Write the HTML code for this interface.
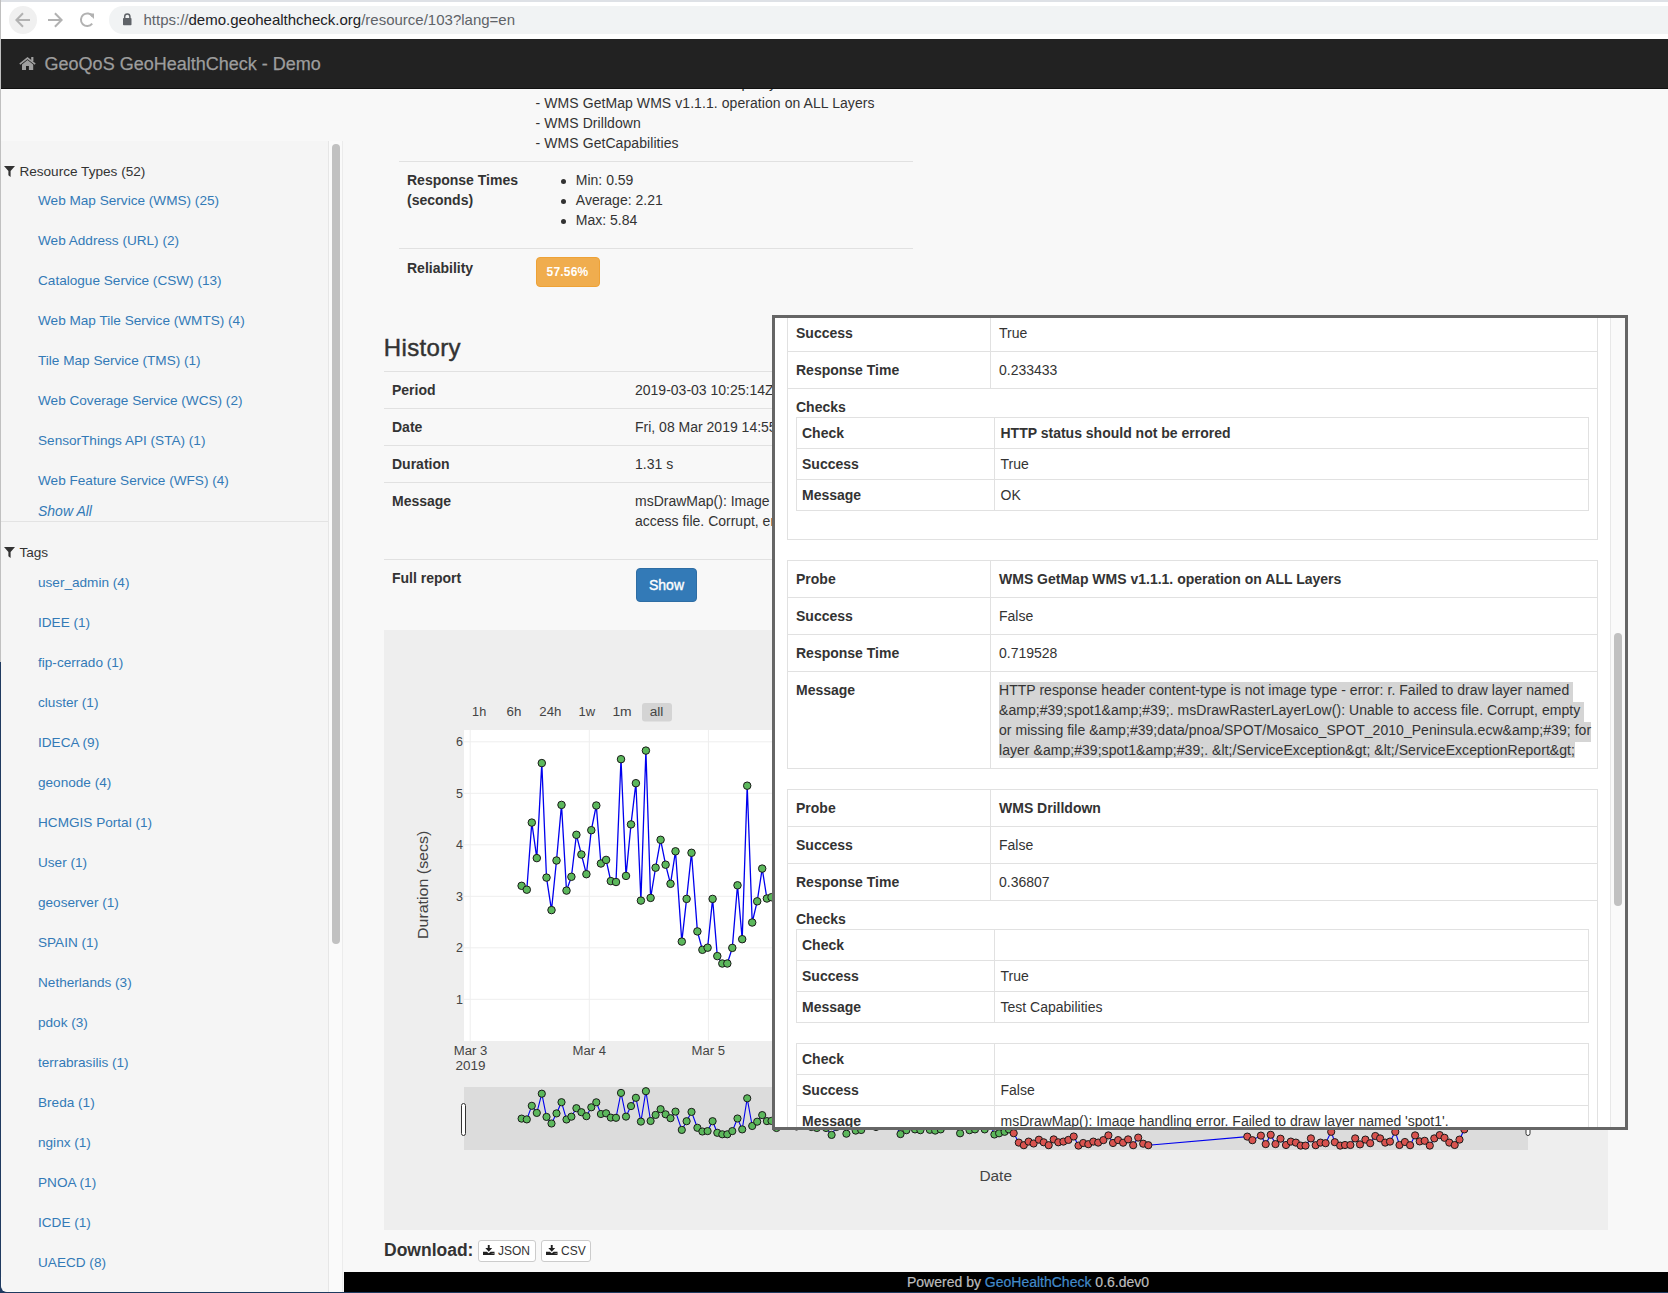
<!DOCTYPE html>
<html><head><meta charset="utf-8">
<style>
html,body{margin:0;padding:0;}
body{width:1668px;height:1293px;position:relative;overflow:hidden;background:#f8f8f8;font-family:"Liberation Sans",sans-serif;font-size:14px;line-height:20px;color:#333;}
.t{position:absolute;white-space:nowrap;line-height:20px;font-size:14px;}
.b{font-weight:bold;}
.lnk{color:#337ab7;}
.ab{position:absolute;}
.hl{position:absolute;background:#e1e1e1;height:1px;}
.vl{position:absolute;background:#e1e1e1;width:1px;}
</style></head><body>
<!-- left window edge -->
<div class="ab" style="left:0;top:0;width:1px;height:662px;background:#c0c0c0"></div><div class="ab" style="left:0;top:662px;width:1px;height:631px;background:#1f3a60"></div>
<!-- browser chrome -->
<div class="ab" style="left:1px;top:0;width:1667px;height:39px;background:#ffffff"></div>
<div class="ab" style="left:1px;top:0;width:1667px;height:2px;background:#dee1e6"></div>
<div class="ab" style="left:9px;top:6px;width:28px;height:28px;border-radius:14px;background:#f0f0f0"></div>
<svg class="ab" style="left:0;top:0" width="110" height="39">
 <g stroke="#b2b2b2" stroke-width="2" fill="none" stroke-linecap="butt">
  <path d="M16.5,20 H30 M23,13.2 L16.4,20 L23,26.8"/>
  <path d="M48,20 H61.5 M54.9,13.2 L61.6,20 L54.9,26.8"/>
  <path d="M92.2,23.6 A6.3,6.3 0 1 1 92.6,16.4"/>
 </g>
 <path d="M88.4,13.5 L94,13.5 L94,19 Z" fill="#b2b2b2"/>
</svg>
<div class="ab" style="left:109px;top:6px;width:1600px;height:28px;border-radius:14px;background:#f1f3f4"></div>
<svg class="ab" style="left:120px;top:10px" width="20" height="20">
 <path d="M4.7,8.5 V6.6 A2.6,2.6 0 0 1 9.9,6.6 V8.5" stroke="#5f6368" stroke-width="1.5" fill="none"/>
 <rect x="3" y="8" width="8.5" height="7.2" rx="0.8" fill="#5f6368"/>
</svg>
<div class="t" style="left:143.5px;top:10px;font-size:15px;color:#5f6368">https://<span style="color:#202124">demo.geohealthcheck.org</span>/resource/103?lang=en</div>

<!-- sidebar -->
<div class="ab" style="left:1px;top:141px;width:327px;height:1152px;background:#f5f5f5"></div>
<div class="ab" style="left:328px;top:141px;width:1px;height:1152px;background:#e6e6e6"></div>
<div class="ab" style="left:329px;top:141px;width:13px;height:1152px;background:#fafafa"></div>
<div class="ab" style="left:342px;top:141px;width:1px;height:1152px;background:#ececec"></div>
<div class="ab" style="left:332px;top:144px;width:8px;height:800px;border-radius:4px;background:#c1c1c1"></div>
<svg width="12" height="12" viewBox="0 0 12 12" style="position:absolute;left:3.9px;top:166px"><path d="M0,0 H11 L6.6,5 V11.1 L4.4,9.3 V5 Z" fill="#333"/></svg>
<div class="t " style="left:19.4px;top:162.1px;font-size:13.6px;color:#333">Resource Types (52)</div>
<div class="t lnk" style="left:38px;top:191.4px;font-size:13.6px;">Web Map Service (WMS) (25)</div>
<div class="t lnk" style="left:38px;top:231.4px;font-size:13.6px;">Web Address (URL) (2)</div>
<div class="t lnk" style="left:38px;top:271.4px;font-size:13.6px;">Catalogue Service (CSW) (13)</div>
<div class="t lnk" style="left:38px;top:311.4px;font-size:13.6px;">Web Map Tile Service (WMTS) (4)</div>
<div class="t lnk" style="left:38px;top:351.4px;font-size:13.6px;">Tile Map Service (TMS) (1)</div>
<div class="t lnk" style="left:38px;top:391.4px;font-size:13.6px;">Web Coverage Service (WCS) (2)</div>
<div class="t lnk" style="left:38px;top:431.4px;font-size:13.6px;">SensorThings API (STA) (1)</div>
<div class="t lnk" style="left:38px;top:471.4px;font-size:13.6px;">Web Feature Service (WFS) (4)</div>
<div class="t lnk" style="left:38px;top:501.3px;font-size:13.6px;font-style:italic;font-size:14px">Show All</div>
<div style="position:absolute;left:1px;top:521px;width:327px;height:1px;background:#e3e3e3"></div>
<svg width="12" height="12" viewBox="0 0 12 12" style="position:absolute;left:3.9px;top:546.5px"><path d="M0,0 H11 L6.6,5 V11.1 L4.4,9.3 V5 Z" fill="#333"/></svg>
<div class="t " style="left:19.4px;top:542.5px;font-size:13.6px;color:#333">Tags</div>
<div class="t lnk" style="left:38px;top:572.5px;font-size:13.6px;">user_admin (4)</div>
<div class="t lnk" style="left:38px;top:612.5px;font-size:13.6px;">IDEE (1)</div>
<div class="t lnk" style="left:38px;top:652.5px;font-size:13.6px;">fip-cerrado (1)</div>
<div class="t lnk" style="left:38px;top:692.5px;font-size:13.6px;">cluster (1)</div>
<div class="t lnk" style="left:38px;top:732.5px;font-size:13.6px;">IDECA (9)</div>
<div class="t lnk" style="left:38px;top:772.5px;font-size:13.6px;">geonode (4)</div>
<div class="t lnk" style="left:38px;top:812.5px;font-size:13.6px;">HCMGIS Portal (1)</div>
<div class="t lnk" style="left:38px;top:852.5px;font-size:13.6px;">User (1)</div>
<div class="t lnk" style="left:38px;top:892.5px;font-size:13.6px;">geoserver (1)</div>
<div class="t lnk" style="left:38px;top:932.5px;font-size:13.6px;">SPAIN (1)</div>
<div class="t lnk" style="left:38px;top:972.5px;font-size:13.6px;">Netherlands (3)</div>
<div class="t lnk" style="left:38px;top:1012.5px;font-size:13.6px;">pdok (3)</div>
<div class="t lnk" style="left:38px;top:1052.5px;font-size:13.6px;">terrabrasilis (1)</div>
<div class="t lnk" style="left:38px;top:1092.5px;font-size:13.6px;">Breda (1)</div>
<div class="t lnk" style="left:38px;top:1132.5px;font-size:13.6px;">nginx (1)</div>
<div class="t lnk" style="left:38px;top:1172.5px;font-size:13.6px;">PNOA (1)</div>
<div class="t lnk" style="left:38px;top:1212.5px;font-size:13.6px;">ICDE (1)</div>
<div class="t lnk" style="left:38px;top:1252.5px;font-size:13.6px;">UAECD (8)</div>

<!-- top info table -->
<div class="t" style="left:535.6px;top:72.7px;letter-spacing:0.07px">- WMS Service Check Ro<span style="display:inline-block;width:26px"></span>empathy</div>
<div class="t" style="left:535.6px;top:92.7px;letter-spacing:0.07px">- WMS GetMap WMS v1.1.1. operation on ALL Layers</div>
<div class="t" style="left:535.6px;top:112.7px;letter-spacing:0.07px">- WMS Drilldown</div>
<div class="t" style="left:535.6px;top:132.7px;letter-spacing:0.07px">- WMS GetCapabilities</div>
<div class="hl" style="left:399px;top:161px;width:514px"></div>
<div class="t b" style="left:407px;top:169.5px">Response Times</div>
<div class="t b" style="left:407px;top:189.5px">(seconds)</div>
<div class="ab" style="left:561px;top:178.5px;width:5px;height:5px;border-radius:3px;background:#333"></div>
<div class="ab" style="left:561px;top:198.5px;width:5px;height:5px;border-radius:3px;background:#333"></div>
<div class="ab" style="left:561px;top:218.5px;width:5px;height:5px;border-radius:3px;background:#333"></div>
<div class="t" style="left:575.8px;top:169.5px">Min: 0.59</div>
<div class="t" style="left:575.8px;top:189.5px">Average: 2.21</div>
<div class="t" style="left:575.8px;top:209.5px">Max: 5.84</div>
<div class="hl" style="left:399px;top:248px;width:514px"></div>
<div class="t b" style="left:407px;top:257.5px">Reliability</div>
<div class="ab" style="left:536px;top:257px;width:62px;height:28px;border:1px solid #eea236;border-radius:4px;background:#f0ad4e;color:#fff;font-weight:bold;font-size:12px;line-height:28px;text-align:center;letter-spacing:0.2px;text-indent:-1px">57.56%</div>

<!-- history -->
<div class="t" style="left:383.8px;top:333.3px;font-size:24px;line-height:30px;color:#333;-webkit-text-stroke:0.45px #333;letter-spacing:0.35px">History</div>
<div class="hl" style="left:384px;top:371px;width:1224px"></div>
<div class="hl" style="left:384px;top:408px;width:1224px"></div>
<div class="hl" style="left:384px;top:445px;width:1224px"></div>
<div class="hl" style="left:384px;top:482px;width:1224px"></div>
<div class="hl" style="left:384px;top:559px;width:1224px"></div>
<div class="t b" style="left:392px;top:380px">Period</div>
<div class="t" style="left:635px;top:380px">2019-03-03 10:25:14Z - 2019-03-08 14:55:14Z</div>
<div class="t b" style="left:392px;top:417px">Date</div>
<div class="t" style="left:635px;top:417px">Fri, 08 Mar 2019 14:55:14 GMT</div>
<div class="t b" style="left:392px;top:454px">Duration</div>
<div class="t" style="left:635px;top:454px">1.31 s</div>
<div class="t b" style="left:392px;top:491px">Message</div>
<div class="t" style="left:635px;top:491px">msDrawMap(): Image handling error. Failed to draw layer named 'spot1'.</div>
<div class="t" style="left:635px;top:511px">access file. Corrupt, empty or missing file</div>
<div class="t b" style="left:392px;top:568px">Full report</div>
<div class="ab" style="left:636px;top:568px;width:59px;height:32px;border:1px solid #2e6da4;border-radius:4px;background:#337ab7;color:#fff;line-height:32px;text-align:center;-webkit-text-stroke:0.35px #fff">Show</div>

<svg style="position:absolute;left:0;top:0" width="1668" height="1293">
<rect x="384" y="630" width="1224" height="600" fill="#eeeeee"/>
<rect x="464" y="730" width="1064" height="311" fill="#ffffff"/>
<line x1="464" x2="1528" y1="999.3" y2="999.3" stroke="#eeeeee" stroke-width="1"/>
<line x1="464" x2="1528" y1="947.8" y2="947.8" stroke="#eeeeee" stroke-width="1"/>
<line x1="464" x2="1528" y1="896.3" y2="896.3" stroke="#eeeeee" stroke-width="1"/>
<line x1="464" x2="1528" y1="844.8" y2="844.8" stroke="#eeeeee" stroke-width="1"/>
<line x1="464" x2="1528" y1="793.3" y2="793.3" stroke="#eeeeee" stroke-width="1"/>
<line x1="464" x2="1528" y1="741.8" y2="741.8" stroke="#eeeeee" stroke-width="1"/>
<line x1="470.2" x2="470.2" y1="730" y2="1041" stroke="#eeeeee" stroke-width="1"/>
<line x1="589.3" x2="589.3" y1="730" y2="1041" stroke="#eeeeee" stroke-width="1"/>
<line x1="708.4" x2="708.4" y1="730" y2="1041" stroke="#eeeeee" stroke-width="1"/>
<line x1="827.5" x2="827.5" y1="730" y2="1041" stroke="#eeeeee" stroke-width="1"/>
<line x1="946.6" x2="946.6" y1="730" y2="1041" stroke="#eeeeee" stroke-width="1"/>
<line x1="1065.7" x2="1065.7" y1="730" y2="1041" stroke="#eeeeee" stroke-width="1"/>
<line x1="1184.8" x2="1184.8" y1="730" y2="1041" stroke="#eeeeee" stroke-width="1"/>
<line x1="1303.9" x2="1303.9" y1="730" y2="1041" stroke="#eeeeee" stroke-width="1"/>
<line x1="1423.0" x2="1423.0" y1="730" y2="1041" stroke="#eeeeee" stroke-width="1"/>
<path d="M521.6,885.8 L526.8,889.7 L531.8,822.6 L536.8,858.1 L541.8,763.1 L546.5,877.6 L551.5,910.1 L556.5,860.5 L561.5,804.9 L566.5,890.6 L571.4,876.8 L576.4,834.8 L581.4,854.5 L586.4,874.2 L591.3,830.2 L596.3,805.5 L600.9,863.5 L606.1,859.9 L610.8,881.1 L616.0,882.0 L621.0,759.2 L626.0,875.9 L631.0,824.4 L635.9,783.2 L640.9,900.6 L645.9,750.6 L650.6,897.9 L655.6,867.7 L660.6,839.8 L665.6,864.7 L670.5,883.8 L675.5,851.3 L681.8,941.6 L686.6,898.9 L691.5,852.8 L697.4,931.4 L702.4,949.8 L707.6,947.7 L712.6,898.9 L717.3,956.1 L722.3,963.5 L727.3,963.5 L732.3,947.9 L737.5,885.3 L742.2,939.2 L747.2,785.7 L752.2,922.5 L757.2,901.3 L762.2,868.6 L766.9,898.5 L771.5,897.2" fill="none" stroke="#0000ee" stroke-width="1.3"/>
<g fill="#5cb85c" stroke="#1a1a1a" stroke-width="1"><circle cx="521.6" cy="885.8" r="3.75"/><circle cx="526.8" cy="889.7" r="3.75"/><circle cx="531.8" cy="822.6" r="3.75"/><circle cx="536.8" cy="858.1" r="3.75"/><circle cx="541.8" cy="763.1" r="3.75"/><circle cx="546.5" cy="877.6" r="3.75"/><circle cx="551.5" cy="910.1" r="3.75"/><circle cx="556.5" cy="860.5" r="3.75"/><circle cx="561.5" cy="804.9" r="3.75"/><circle cx="566.5" cy="890.6" r="3.75"/><circle cx="571.4" cy="876.8" r="3.75"/><circle cx="576.4" cy="834.8" r="3.75"/><circle cx="581.4" cy="854.5" r="3.75"/><circle cx="586.4" cy="874.2" r="3.75"/><circle cx="591.3" cy="830.2" r="3.75"/><circle cx="596.3" cy="805.5" r="3.75"/><circle cx="600.9" cy="863.5" r="3.75"/><circle cx="606.1" cy="859.9" r="3.75"/><circle cx="610.8" cy="881.1" r="3.75"/><circle cx="616.0" cy="882.0" r="3.75"/><circle cx="621.0" cy="759.2" r="3.75"/><circle cx="626.0" cy="875.9" r="3.75"/><circle cx="631.0" cy="824.4" r="3.75"/><circle cx="635.9" cy="783.2" r="3.75"/><circle cx="640.9" cy="900.6" r="3.75"/><circle cx="645.9" cy="750.6" r="3.75"/><circle cx="650.6" cy="897.9" r="3.75"/><circle cx="655.6" cy="867.7" r="3.75"/><circle cx="660.6" cy="839.8" r="3.75"/><circle cx="665.6" cy="864.7" r="3.75"/><circle cx="670.5" cy="883.8" r="3.75"/><circle cx="675.5" cy="851.3" r="3.75"/><circle cx="681.8" cy="941.6" r="3.75"/><circle cx="686.6" cy="898.9" r="3.75"/><circle cx="691.5" cy="852.8" r="3.75"/><circle cx="697.4" cy="931.4" r="3.75"/><circle cx="702.4" cy="949.8" r="3.75"/><circle cx="707.6" cy="947.7" r="3.75"/><circle cx="712.6" cy="898.9" r="3.75"/><circle cx="717.3" cy="956.1" r="3.75"/><circle cx="722.3" cy="963.5" r="3.75"/><circle cx="727.3" cy="963.5" r="3.75"/><circle cx="732.3" cy="947.9" r="3.75"/><circle cx="737.5" cy="885.3" r="3.75"/><circle cx="742.2" cy="939.2" r="3.75"/><circle cx="747.2" cy="785.7" r="3.75"/><circle cx="752.2" cy="922.5" r="3.75"/><circle cx="757.2" cy="901.3" r="3.75"/><circle cx="762.2" cy="868.6" r="3.75"/><circle cx="766.9" cy="898.5" r="3.75"/><circle cx="771.5" cy="897.2" r="3.75"/></g>
<rect x="464" y="1087" width="1064" height="63" fill="#dcdcdc"/>
<clipPath id="sc"><rect x="464" y="1087" width="1064" height="63"/></clipPath>
<g clip-path="url(#sc)">
<path d="M521.6,1118.6 L526.8,1119.4 L531.8,1105.8 L536.8,1112.9 L541.8,1093.7 L546.5,1116.9 L551.5,1123.5 L556.5,1113.4 L561.5,1102.2 L566.5,1119.5 L571.4,1116.7 L576.4,1108.2 L581.4,1112.2 L586.4,1116.2 L591.3,1107.3 L596.3,1102.3 L600.9,1114.0 L606.1,1113.3 L610.8,1117.6 L616.0,1117.8 L621.0,1092.9 L626.0,1116.6 L631.0,1106.1 L635.9,1097.8 L640.9,1121.6 L645.9,1091.2 L650.6,1121.0 L655.6,1114.9 L660.6,1109.2 L665.6,1114.3 L670.5,1118.2 L675.5,1111.6 L681.8,1129.9 L686.6,1121.2 L691.5,1111.9 L697.4,1127.8 L702.4,1131.5 L707.6,1131.1 L712.6,1121.2 L717.3,1132.8 L722.3,1134.3 L727.3,1134.3 L732.3,1131.1 L737.5,1118.5 L742.2,1129.4 L747.2,1098.3 L752.2,1126.0 L757.2,1121.7 L762.2,1115.1 L766.9,1121.1 L771.5,1120.9 L776.5,1128.0 L781.5,1120.0 L786.5,1112.0 L791.5,1118.0 L796.5,1126.5 L801.5,1115.0 L806.5,1110.0 L811.3,1127.0 L816.8,1128.0 L821.5,1118.0 L826.1,1128.0 L831.6,1134.9 L836.3,1127.0 L841.3,1120.0 L846.4,1133.7 L851.0,1120.0 L855.7,1130.6 L861.2,1130.0 L866.0,1116.0 L871.0,1122.0 L876.0,1127.0 L881.0,1118.0 L886.0,1112.0 L891.0,1120.0 L895.5,1125.0 L900.5,1134.1 L906.4,1130.2 L911.0,1122.0 L915.0,1129.4 L920.4,1130.2 L925.0,1120.0 L929.8,1129.8 L935.2,1130.6 L940.7,1129.4 L945.0,1118.0 L950.0,1112.0 L955.0,1124.0 L960.1,1133.3 L964.7,1124.0 L969.5,1130.2 L975.0,1129.4 L980.0,1120.0 L984.7,1129.4 L989.5,1122.0 L994.4,1134.5 L999.1,1133.3 L1004.6,1131.8 L1008.9,1129.4 L1013.7,1133.2 L1018.8,1142.6 L1023.8,1145.2 L1028.6,1141.6 L1033.6,1143.5 L1038.9,1139.7 L1043.7,1142.3 L1048.7,1145.2 L1053.7,1139.4 L1058.3,1142.3 L1063.4,1141.6 L1068.4,1139.9 L1073.7,1136.5 L1078.5,1145.6 L1083.2,1143.0 L1088.3,1144.2 L1093.3,1141.6 L1098.2,1142.6 L1103.4,1140.1 L1108.4,1135.4 L1113.0,1143.0 L1118.1,1140.1 L1123.1,1142.7 L1128.1,1139.4 L1133.2,1145.2 L1138.2,1137.6 L1143.2,1143.7 L1148.3,1145.2 L1247.3,1136.6 L1252.4,1140.2 L1260.9,1135.6 L1265.7,1144.1 L1270.7,1134.8 L1275.5,1144.1 L1280.5,1138.7 L1286.0,1145.0 L1290.8,1141.6 L1295.9,1142.6 L1300.7,1145.6 L1305.5,1145.6 L1310.9,1138.4 L1315.7,1145.2 L1320.5,1142.6 L1325.6,1143.2 L1331.2,1131.8 L1334.8,1142.2 L1340.2,1145.6 L1345.0,1145.0 L1350.4,1145.0 L1355.2,1138.4 L1360.0,1144.4 L1365.4,1139.6 L1370.2,1143.2 L1375.3,1136.0 L1380.1,1138.4 L1385.2,1142.6 L1390.0,1141.6 L1395.3,1131.8 L1399.5,1145.0 L1404.9,1142.0 L1410.1,1145.2 L1415.1,1135.4 L1419.7,1141.4 L1424.7,1140.8 L1429.8,1145.6 L1434.3,1138.4 L1439.7,1135.1 L1444.5,1137.8 L1449.3,1142.6 L1454.7,1145.0 L1459.5,1139.6 L1464.3,1129.4" fill="none" stroke="#0000ee" stroke-width="1.1"/>
<g fill="#5cb85c" stroke="#1a1a1a" stroke-width="1"><circle cx="521.6" cy="1118.6" r="3.6"/><circle cx="526.8" cy="1119.4" r="3.6"/><circle cx="531.8" cy="1105.8" r="3.6"/><circle cx="536.8" cy="1112.9" r="3.6"/><circle cx="541.8" cy="1093.7" r="3.6"/><circle cx="546.5" cy="1116.9" r="3.6"/><circle cx="551.5" cy="1123.5" r="3.6"/><circle cx="556.5" cy="1113.4" r="3.6"/><circle cx="561.5" cy="1102.2" r="3.6"/><circle cx="566.5" cy="1119.5" r="3.6"/><circle cx="571.4" cy="1116.7" r="3.6"/><circle cx="576.4" cy="1108.2" r="3.6"/><circle cx="581.4" cy="1112.2" r="3.6"/><circle cx="586.4" cy="1116.2" r="3.6"/><circle cx="591.3" cy="1107.3" r="3.6"/><circle cx="596.3" cy="1102.3" r="3.6"/><circle cx="600.9" cy="1114.0" r="3.6"/><circle cx="606.1" cy="1113.3" r="3.6"/><circle cx="610.8" cy="1117.6" r="3.6"/><circle cx="616.0" cy="1117.8" r="3.6"/><circle cx="621.0" cy="1092.9" r="3.6"/><circle cx="626.0" cy="1116.6" r="3.6"/><circle cx="631.0" cy="1106.1" r="3.6"/><circle cx="635.9" cy="1097.8" r="3.6"/><circle cx="640.9" cy="1121.6" r="3.6"/><circle cx="645.9" cy="1091.2" r="3.6"/><circle cx="650.6" cy="1121.0" r="3.6"/><circle cx="655.6" cy="1114.9" r="3.6"/><circle cx="660.6" cy="1109.2" r="3.6"/><circle cx="665.6" cy="1114.3" r="3.6"/><circle cx="670.5" cy="1118.2" r="3.6"/><circle cx="675.5" cy="1111.6" r="3.6"/><circle cx="681.8" cy="1129.9" r="3.6"/><circle cx="686.6" cy="1121.2" r="3.6"/><circle cx="691.5" cy="1111.9" r="3.6"/><circle cx="697.4" cy="1127.8" r="3.6"/><circle cx="702.4" cy="1131.5" r="3.6"/><circle cx="707.6" cy="1131.1" r="3.6"/><circle cx="712.6" cy="1121.2" r="3.6"/><circle cx="717.3" cy="1132.8" r="3.6"/><circle cx="722.3" cy="1134.3" r="3.6"/><circle cx="727.3" cy="1134.3" r="3.6"/><circle cx="732.3" cy="1131.1" r="3.6"/><circle cx="737.5" cy="1118.5" r="3.6"/><circle cx="742.2" cy="1129.4" r="3.6"/><circle cx="747.2" cy="1098.3" r="3.6"/><circle cx="752.2" cy="1126.0" r="3.6"/><circle cx="757.2" cy="1121.7" r="3.6"/><circle cx="762.2" cy="1115.1" r="3.6"/><circle cx="766.9" cy="1121.1" r="3.6"/><circle cx="771.5" cy="1120.9" r="3.6"/><circle cx="776.5" cy="1128.0" r="3.6"/><circle cx="781.5" cy="1120.0" r="3.6"/><circle cx="786.5" cy="1112.0" r="3.6"/><circle cx="791.5" cy="1118.0" r="3.6"/><circle cx="796.5" cy="1126.5" r="3.6"/><circle cx="801.5" cy="1115.0" r="3.6"/><circle cx="806.5" cy="1110.0" r="3.6"/><circle cx="811.3" cy="1127.0" r="3.6"/><circle cx="816.8" cy="1128.0" r="3.6"/><circle cx="821.5" cy="1118.0" r="3.6"/><circle cx="826.1" cy="1128.0" r="3.6"/><circle cx="831.6" cy="1134.9" r="3.6"/><circle cx="836.3" cy="1127.0" r="3.6"/><circle cx="841.3" cy="1120.0" r="3.6"/><circle cx="846.4" cy="1133.7" r="3.6"/><circle cx="851.0" cy="1120.0" r="3.6"/><circle cx="855.7" cy="1130.6" r="3.6"/><circle cx="861.2" cy="1130.0" r="3.6"/><circle cx="866.0" cy="1116.0" r="3.6"/><circle cx="871.0" cy="1122.0" r="3.6"/><circle cx="876.0" cy="1127.0" r="3.6"/><circle cx="881.0" cy="1118.0" r="3.6"/><circle cx="886.0" cy="1112.0" r="3.6"/><circle cx="891.0" cy="1120.0" r="3.6"/><circle cx="895.5" cy="1125.0" r="3.6"/><circle cx="900.5" cy="1134.1" r="3.6"/><circle cx="906.4" cy="1130.2" r="3.6"/><circle cx="911.0" cy="1122.0" r="3.6"/><circle cx="915.0" cy="1129.4" r="3.6"/><circle cx="920.4" cy="1130.2" r="3.6"/><circle cx="925.0" cy="1120.0" r="3.6"/><circle cx="929.8" cy="1129.8" r="3.6"/><circle cx="935.2" cy="1130.6" r="3.6"/><circle cx="940.7" cy="1129.4" r="3.6"/><circle cx="945.0" cy="1118.0" r="3.6"/><circle cx="950.0" cy="1112.0" r="3.6"/><circle cx="955.0" cy="1124.0" r="3.6"/><circle cx="960.1" cy="1133.3" r="3.6"/><circle cx="964.7" cy="1124.0" r="3.6"/><circle cx="969.5" cy="1130.2" r="3.6"/><circle cx="975.0" cy="1129.4" r="3.6"/><circle cx="980.0" cy="1120.0" r="3.6"/><circle cx="984.7" cy="1129.4" r="3.6"/><circle cx="989.5" cy="1122.0" r="3.6"/><circle cx="994.4" cy="1134.5" r="3.6"/><circle cx="999.1" cy="1133.3" r="3.6"/><circle cx="1004.6" cy="1131.8" r="3.6"/><circle cx="1008.9" cy="1129.4" r="3.6"/></g>
<g fill="#d9534f" stroke="#1a1a1a" stroke-width="1"><circle cx="1013.7" cy="1133.2" r="3.6"/><circle cx="1018.8" cy="1142.6" r="3.6"/><circle cx="1023.8" cy="1145.2" r="3.6"/><circle cx="1028.6" cy="1141.6" r="3.6"/><circle cx="1033.6" cy="1143.5" r="3.6"/><circle cx="1038.9" cy="1139.7" r="3.6"/><circle cx="1043.7" cy="1142.3" r="3.6"/><circle cx="1048.7" cy="1145.2" r="3.6"/><circle cx="1053.7" cy="1139.4" r="3.6"/><circle cx="1058.3" cy="1142.3" r="3.6"/><circle cx="1063.4" cy="1141.6" r="3.6"/><circle cx="1068.4" cy="1139.9" r="3.6"/><circle cx="1073.7" cy="1136.5" r="3.6"/><circle cx="1078.5" cy="1145.6" r="3.6"/><circle cx="1083.2" cy="1143.0" r="3.6"/><circle cx="1088.3" cy="1144.2" r="3.6"/><circle cx="1093.3" cy="1141.6" r="3.6"/><circle cx="1098.2" cy="1142.6" r="3.6"/><circle cx="1103.4" cy="1140.1" r="3.6"/><circle cx="1108.4" cy="1135.4" r="3.6"/><circle cx="1113.0" cy="1143.0" r="3.6"/><circle cx="1118.1" cy="1140.1" r="3.6"/><circle cx="1123.1" cy="1142.7" r="3.6"/><circle cx="1128.1" cy="1139.4" r="3.6"/><circle cx="1133.2" cy="1145.2" r="3.6"/><circle cx="1138.2" cy="1137.6" r="3.6"/><circle cx="1143.2" cy="1143.7" r="3.6"/><circle cx="1148.3" cy="1145.2" r="3.6"/><circle cx="1247.3" cy="1136.6" r="3.6"/><circle cx="1252.4" cy="1140.2" r="3.6"/><circle cx="1260.9" cy="1135.6" r="3.6"/><circle cx="1265.7" cy="1144.1" r="3.6"/><circle cx="1270.7" cy="1134.8" r="3.6"/><circle cx="1275.5" cy="1144.1" r="3.6"/><circle cx="1280.5" cy="1138.7" r="3.6"/><circle cx="1286.0" cy="1145.0" r="3.6"/><circle cx="1290.8" cy="1141.6" r="3.6"/><circle cx="1295.9" cy="1142.6" r="3.6"/><circle cx="1300.7" cy="1145.6" r="3.6"/><circle cx="1305.5" cy="1145.6" r="3.6"/><circle cx="1310.9" cy="1138.4" r="3.6"/><circle cx="1315.7" cy="1145.2" r="3.6"/><circle cx="1320.5" cy="1142.6" r="3.6"/><circle cx="1325.6" cy="1143.2" r="3.6"/><circle cx="1331.2" cy="1131.8" r="3.6"/><circle cx="1334.8" cy="1142.2" r="3.6"/><circle cx="1340.2" cy="1145.6" r="3.6"/><circle cx="1345.0" cy="1145.0" r="3.6"/><circle cx="1350.4" cy="1145.0" r="3.6"/><circle cx="1355.2" cy="1138.4" r="3.6"/><circle cx="1360.0" cy="1144.4" r="3.6"/><circle cx="1365.4" cy="1139.6" r="3.6"/><circle cx="1370.2" cy="1143.2" r="3.6"/><circle cx="1375.3" cy="1136.0" r="3.6"/><circle cx="1380.1" cy="1138.4" r="3.6"/><circle cx="1385.2" cy="1142.6" r="3.6"/><circle cx="1390.0" cy="1141.6" r="3.6"/><circle cx="1395.3" cy="1131.8" r="3.6"/><circle cx="1399.5" cy="1145.0" r="3.6"/><circle cx="1404.9" cy="1142.0" r="3.6"/><circle cx="1410.1" cy="1145.2" r="3.6"/><circle cx="1415.1" cy="1135.4" r="3.6"/><circle cx="1419.7" cy="1141.4" r="3.6"/><circle cx="1424.7" cy="1140.8" r="3.6"/><circle cx="1429.8" cy="1145.6" r="3.6"/><circle cx="1434.3" cy="1138.4" r="3.6"/><circle cx="1439.7" cy="1135.1" r="3.6"/><circle cx="1444.5" cy="1137.8" r="3.6"/><circle cx="1449.3" cy="1142.6" r="3.6"/><circle cx="1454.7" cy="1145.0" r="3.6"/><circle cx="1459.5" cy="1139.6" r="3.6"/><circle cx="1464.3" cy="1129.4" r="3.6"/></g>
</g>
<rect x="461.5" y="1103.5" width="4" height="32" rx="2" fill="#fff" stroke="#333" stroke-width="1"/>
<rect x="1526" y="1103.5" width="4" height="32" rx="2" fill="#fff" stroke="#333" stroke-width="1"/>
<rect x="642" y="703" width="30" height="18.5" rx="3" fill="#d4d4d4"/>
<text x="472.1" y="716" font-family="Liberation Sans" fill="#444" font-size="12.5" textLength="14.1" lengthAdjust="spacingAndGlyphs">1h</text>
<text x="506.6" y="716" font-family="Liberation Sans" fill="#444" font-size="12.5" textLength="14.8" lengthAdjust="spacingAndGlyphs">6h</text>
<text x="539.3" y="716" font-family="Liberation Sans" fill="#444" font-size="12.5" textLength="22.1" lengthAdjust="spacingAndGlyphs">24h</text>
<text x="578.6" y="716" font-family="Liberation Sans" fill="#444" font-size="12.5" textLength="16.6" lengthAdjust="spacingAndGlyphs">1w</text>
<text x="612.4" y="716" font-family="Liberation Sans" fill="#444" font-size="12.5" textLength="19.3" lengthAdjust="spacingAndGlyphs">1m</text>
<text x="649.7" y="716" font-family="Liberation Sans" fill="#444" font-size="12.5" textLength="13.7" lengthAdjust="spacingAndGlyphs">all</text>
<text x="463" y="1003.8" font-family="Liberation Sans" fill="#444" font-size="12.5" text-anchor="end">1</text>
<text x="463" y="952.3" font-family="Liberation Sans" fill="#444" font-size="12.5" text-anchor="end">2</text>
<text x="463" y="900.8" font-family="Liberation Sans" fill="#444" font-size="12.5" text-anchor="end">3</text>
<text x="463" y="849.3" font-family="Liberation Sans" fill="#444" font-size="12.5" text-anchor="end">4</text>
<text x="463" y="797.8" font-family="Liberation Sans" fill="#444" font-size="12.5" text-anchor="end">5</text>
<text x="463" y="746.3" font-family="Liberation Sans" fill="#444" font-size="12.5" text-anchor="end">6</text>
<text x="453.8" y="1054.5" font-family="Liberation Sans" fill="#444" font-size="12.5" textLength="33.6" lengthAdjust="spacingAndGlyphs">Mar 3</text>
<text x="455.6" y="1070" font-family="Liberation Sans" fill="#444" font-size="12.5" textLength="30" lengthAdjust="spacingAndGlyphs">2019</text>
<text x="572.5" y="1054.5" font-family="Liberation Sans" fill="#444" font-size="12.5" textLength="33.5" lengthAdjust="spacingAndGlyphs">Mar 4</text>
<text x="691.6" y="1054.5" font-family="Liberation Sans" fill="#444" font-size="12.5" textLength="33.5" lengthAdjust="spacingAndGlyphs">Mar 5</text>
<text x="979.4" y="1181" font-family="Liberation Sans" fill="#444" font-size="14" textLength="32.6" lengthAdjust="spacingAndGlyphs">Date</text>
<text transform="translate(428,939) rotate(-90)" font-family="Liberation Sans" fill="#444" font-size="14.5" textLength="108.3" lengthAdjust="spacingAndGlyphs">Duration (secs)</text>
</svg>

<!-- download -->
<div class="t b" style="left:384px;top:1238px;font-size:17.5px;line-height:24px">Download:</div>
<div class="ab" style="left:478px;top:1240px;width:56px;height:20px;border:1px solid #ccc;border-radius:3px;background:#fff;font-size:12px;line-height:20px;color:#333">
 <svg class="ab" style="left:4.3px;top:3.8px" width="12" height="11" viewBox="0 0 12 11"><path d="M4.8,0 H6.7 V3.1 H9.2 L5.75,6.7 L2.3,3.1 H4.8 Z M0,6.7 H3.9 L5.75,8.3 L7.6,6.7 H11.5 V10 H0 Z" fill="#222"/><circle cx="9.1" cy="8.4" r="0.45" fill="#fff"/><circle cx="10.3" cy="8.4" r="0.45" fill="#fff"/></svg>
 <span class="ab" style="left:19px;top:0">JSON</span></div>
<div class="ab" style="left:541px;top:1240px;width:48px;height:20px;border:1px solid #ccc;border-radius:3px;background:#fff;font-size:12px;line-height:20px;color:#333">
 <svg class="ab" style="left:4.3px;top:3.8px" width="12" height="11" viewBox="0 0 12 11"><path d="M4.8,0 H6.7 V3.1 H9.2 L5.75,6.7 L2.3,3.1 H4.8 Z M0,6.7 H3.9 L5.75,8.3 L7.6,6.7 H11.5 V10 H0 Z" fill="#222"/><circle cx="9.1" cy="8.4" r="0.45" fill="#fff"/><circle cx="10.3" cy="8.4" r="0.45" fill="#fff"/></svg>
 <span class="ab" style="left:19px;top:0">CSV</span></div>

<!-- footer -->
<div class="ab" style="left:344px;top:1272px;width:1324px;height:21px;background:#000"></div>
<div class="t" style="left:907px;top:1272px;color:#bdbdbd;-webkit-text-stroke:0.2px #bdbdbd">Powered by <span style="color:#428bca;-webkit-text-stroke:0.2px #428bca">GeoHealthCheck</span> 0.6.dev0</div>
<div class="ab" style="left:0;top:1292px;width:1668px;height:1px;background:#1e3a5f"></div>
<div class="ab" style="left:0;top:1283px;width:10px;height:10px;background:#1f3a60"></div><div class="ab" style="left:1px;top:1277px;width:20px;height:15px;border-bottom-left-radius:6px;background:#f5f5f5;border-left:1px solid #fafafa;border-bottom:1px solid #fafafa;box-sizing:border-box"></div>

<!-- nav (drawn above content) -->
<div class="ab" style="left:1px;top:39px;width:1667px;height:49px;background:#222;border-bottom:1px solid #111"></div>
<svg class="ab" style="left:19px;top:56px" width="17" height="15" viewBox="0 0 17 15">
 <path d="M0.8,8.1 L8.5,2.1 L16.2,8.1" stroke="#a0a0a0" stroke-width="1.6" fill="none"/>
 <rect x="12.2" y="1" width="2.2" height="4.2" fill="#a0a0a0"/>
 <path d="M3,8.4 L8.5,4.1 L14.2,8.4 V13.9 H9.9 V9.9 H7 V13.9 H3 Z" fill="#a0a0a0"/>
</svg>
<div class="t" style="left:44.6px;top:52px;font-size:18px;line-height:24px;color:#9d9d9d;-webkit-text-stroke:0.25px #9d9d9d">GeoQoS GeoHealthCheck - Demo</div>

<!-- popup -->
<div class="ab" style="left:772px;top:315px;width:850px;height:809px;border:3px solid #666;background:#fff;overflow:hidden"><div class="hl" style="left:12px;top:-4px;width:811px"></div>
<div class="t b" style="left:21.0px;top:5.0px;">Success</div>
<div class="t" style="left:224.0px;top:5.0px;">True</div>
<div class="vl" style="left:215px;top:-4px;height:38px"></div>
<div class="hl" style="left:12px;top:33px;width:811px"></div>
<div class="t b" style="left:21.0px;top:42.0px;">Response Time</div>
<div class="t" style="left:224.0px;top:42.0px;">0.233433</div>
<div class="vl" style="left:215px;top:33px;height:38px"></div>
<div class="hl" style="left:12px;top:70px;width:811px"></div>
<div class="t b" style="left:21.0px;top:79.0px;">Checks</div>
<div class="hl" style="left:12px;top:221px;width:811px"></div>
<div class="vl" style="left:12px;top:-4px;height:226px"></div>
<div class="vl" style="left:822px;top:-4px;height:226px"></div>
<div class="hl" style="left:21px;top:99px;width:793px"></div>
<div class="t b" style="left:27.0px;top:105.0px;">Check</div>
<div class="t b" style="left:225.5px;top:105.0px;">HTTP status should not be errored</div>
<div class="vl" style="left:219px;top:99px;height:32px"></div>
<div class="hl" style="left:21px;top:130px;width:793px"></div>
<div class="t b" style="left:27.0px;top:136.0px;">Success</div>
<div class="t" style="left:225.5px;top:136.0px;">True</div>
<div class="vl" style="left:219px;top:130px;height:32px"></div>
<div class="hl" style="left:21px;top:161px;width:793px"></div>
<div class="t b" style="left:27.0px;top:167.0px;">Message</div>
<div class="t" style="left:225.5px;top:167.0px;">OK</div>
<div class="vl" style="left:219px;top:161px;height:32px"></div>
<div class="hl" style="left:21px;top:192px;width:793px"></div>
<div class="vl" style="left:21px;top:99px;height:94px"></div>
<div class="vl" style="left:813px;top:99px;height:94px"></div>
<div class="hl" style="left:12px;top:242px;width:811px"></div>
<div class="t b" style="left:21.0px;top:251.0px;">Probe</div>
<div class="t b" style="left:224.0px;top:251.0px;">WMS GetMap WMS v1.1.1. operation on ALL Layers</div>
<div class="vl" style="left:215px;top:242px;height:38px"></div>
<div class="hl" style="left:12px;top:279px;width:811px"></div>
<div class="t b" style="left:21.0px;top:288.0px;">Success</div>
<div class="t" style="left:224.0px;top:288.0px;">False</div>
<div class="vl" style="left:215px;top:279px;height:38px"></div>
<div class="hl" style="left:12px;top:316px;width:811px"></div>
<div class="t b" style="left:21.0px;top:325.0px;">Response Time</div>
<div class="t" style="left:224.0px;top:325.0px;">0.719528</div>
<div class="vl" style="left:215px;top:316px;height:38px"></div>
<div class="hl" style="left:12px;top:353px;width:811px"></div>
<div class="t b" style="left:21.0px;top:362.0px;">Message</div>
<div class="ab" style="left:224px;top:364px;height:20px;background:#d5d5d5"><span style="visibility:hidden;white-space:pre;letter-spacing:0.045px">HTTP response header content-type is not image type - error: r. Failed to draw layer named </span></div>
<div class="t" style="left:224.0px;top:362.0px;"><span style="white-space:pre;letter-spacing:0.045px">HTTP response header content-type is not image type - error: r. Failed to draw layer named </span></div>
<div class="ab" style="left:224px;top:384px;height:20px;background:#d5d5d5"><span style="visibility:hidden;white-space:pre;letter-spacing:0.045px">&amp;amp;#39;spot1&amp;amp;#39;. msDrawRasterLayerLow(): Unable to access file. Corrupt, empty </span></div>
<div class="t" style="left:224.0px;top:382.0px;"><span style="white-space:pre;letter-spacing:0.045px">&amp;amp;#39;spot1&amp;amp;#39;. msDrawRasterLayerLow(): Unable to access file. Corrupt, empty </span></div>
<div class="ab" style="left:224px;top:404px;height:20px;background:#d5d5d5"><span style="visibility:hidden;white-space:pre;letter-spacing:0.045px">or missing file &amp;amp;#39;data/pnoa/SPOT/Mosaico_SPOT_2010_Peninsula.ecw&amp;amp;#39; for</span></div>
<div class="t" style="left:224.0px;top:402.0px;"><span style="white-space:pre;letter-spacing:0.045px">or missing file &amp;amp;#39;data/pnoa/SPOT/Mosaico_SPOT_2010_Peninsula.ecw&amp;amp;#39; for</span></div>
<div class="ab" style="left:224px;top:424px;height:16px;background:#d5d5d5"><span style="visibility:hidden;white-space:pre;letter-spacing:0.045px">layer &amp;amp;#39;spot1&amp;amp;#39;. &amp;lt;/ServiceException&amp;gt; &amp;lt;/ServiceExceptionReport&amp;gt;</span></div>
<div class="t" style="left:224.0px;top:422.0px;"><span style="white-space:pre;letter-spacing:0.045px">layer &amp;amp;#39;spot1&amp;amp;#39;. &amp;lt;/ServiceException&amp;gt; &amp;lt;/ServiceExceptionReport&amp;gt;</span></div>
<div class="vl" style="left:215px;top:353px;height:98px"></div>
<div class="hl" style="left:12px;top:450px;width:811px"></div>
<div class="vl" style="left:12px;top:242px;height:209px"></div>
<div class="vl" style="left:822px;top:242px;height:209px"></div>
<div class="hl" style="left:12px;top:471px;width:811px"></div>
<div class="t b" style="left:21.0px;top:480.0px;">Probe</div>
<div class="t b" style="left:224.0px;top:480.0px;">WMS Drilldown</div>
<div class="vl" style="left:215px;top:471px;height:38px"></div>
<div class="hl" style="left:12px;top:508px;width:811px"></div>
<div class="t b" style="left:21.0px;top:517.0px;">Success</div>
<div class="t" style="left:224.0px;top:517.0px;">False</div>
<div class="vl" style="left:215px;top:508px;height:38px"></div>
<div class="hl" style="left:12px;top:545px;width:811px"></div>
<div class="t b" style="left:21.0px;top:554.0px;">Response Time</div>
<div class="t" style="left:224.0px;top:554.0px;">0.36807</div>
<div class="vl" style="left:215px;top:545px;height:38px"></div>
<div class="hl" style="left:12px;top:582px;width:811px"></div>
<div class="t b" style="left:21.0px;top:591.0px;">Checks</div>
<div class="vl" style="left:12px;top:471px;height:352px"></div>
<div class="vl" style="left:822px;top:471px;height:352px"></div>
<div class="hl" style="left:21px;top:611px;width:793px"></div>
<div class="t b" style="left:27.0px;top:617.0px;">Check</div>
<div class="vl" style="left:219px;top:611px;height:32px"></div>
<div class="hl" style="left:21px;top:642px;width:793px"></div>
<div class="t b" style="left:27.0px;top:648.0px;">Success</div>
<div class="t" style="left:225.5px;top:648.0px;">True</div>
<div class="vl" style="left:219px;top:642px;height:32px"></div>
<div class="hl" style="left:21px;top:673px;width:793px"></div>
<div class="t b" style="left:27.0px;top:679.0px;">Message</div>
<div class="t" style="left:225.5px;top:679.0px;">Test Capabilities</div>
<div class="vl" style="left:219px;top:673px;height:32px"></div>
<div class="hl" style="left:21px;top:704px;width:793px"></div>
<div class="vl" style="left:21px;top:611px;height:94px"></div>
<div class="vl" style="left:813px;top:611px;height:94px"></div>
<div class="hl" style="left:21px;top:725px;width:793px"></div>
<div class="t b" style="left:27.0px;top:731.0px;">Check</div>
<div class="vl" style="left:219px;top:725px;height:32px"></div>
<div class="hl" style="left:21px;top:756px;width:793px"></div>
<div class="t b" style="left:27.0px;top:762.0px;">Success</div>
<div class="t" style="left:225.5px;top:762.0px;">False</div>
<div class="vl" style="left:219px;top:756px;height:32px"></div>
<div class="hl" style="left:21px;top:787px;width:793px"></div>
<div class="t b" style="left:27.0px;top:793.0px;">Message</div>
<div class="t" style="left:225.5px;top:793.0px;">msDrawMap(): Image handling error. Failed to draw layer named 'spot1'.</div>
<div class="vl" style="left:219px;top:787px;height:32px"></div>
<div class="hl" style="left:21px;top:818px;width:793px"></div>
<div class="vl" style="left:21px;top:725px;height:94px"></div>
<div class="vl" style="left:813px;top:725px;height:94px"></div>
<div class="ab" style="left:835px;top:0;width:15px;height:809px;background:#fafafa;border-left:1px solid #e8e8e8;box-sizing:border-box"></div>
<div class="ab" style="left:839px;top:315px;width:8px;height:273px;border-radius:4px;background:#c1c1c1"></div></div>
</body></html>
